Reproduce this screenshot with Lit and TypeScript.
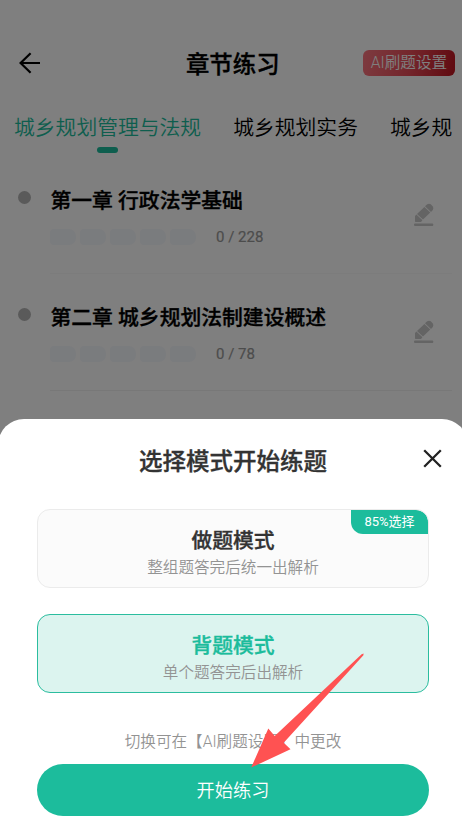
import { LitElement, html, css, svg, nothing } from "lit";
import { customElement, property, state } from "lit/decorators.js";
import { classMap } from "lit/directives/class-map.js";

@customElement("chapter-item")
class ChapterItem extends LitElement {
  @property() heading = "";
  @property() count = "";

  static styles = css`
    :host {
      display: flex;
      height: 117px;
      padding: 0 10px 0 18px;
      box-sizing: border-box;
    }
    .dot {
      width: 13px;
      height: 13px;
      border-radius: 50%;
      background: #b4b4b4;
      margin: 34px 19px 0 0;
      flex: none;
    }
    .row {
      flex: 1;
      display: flex;
      justify-content: space-between;
      border-bottom: 1px solid #f1f1f1;
    }
    :host(:first-child) .row {
      border-bottom-color: #f8f8f8;
    }
    .heading {
      margin-top: 29px;
      padding-left: 0.5px;
      font-size: 20.8px;
      line-height: 30px;
      font-weight: 500;
      -webkit-text-stroke: 0.35px currentColor;
      white-space: nowrap;
    }
    .progress {
      display: flex;
      align-items: center;
      gap: 4px;
      height: 16px;
      margin-top: 13px;
    }
    .seg {
      width: 26px;
      height: 16px;
      border-radius: 4px 7px 7px 4px;
      background: #f5f8fc;
    }
    .count {
      margin-left: 16px;
      font-size: 15px;
      line-height: 17px;
      -webkit-text-stroke: 0.2px currentColor;
      color: #999;
      white-space: nowrap;
    }
    .edit {
      width: 20px;
      height: 24px;
      margin: 46px 18px 0 0;
      flex: none;
    }
  `;

  render() {
    return html`
      <span class="dot"></span>
      <div class="row">
        <div>
          <div class="heading">${this.heading}</div>
          <div class="progress">
            ${[0, 1, 2, 3, 4].map(() => html`<span class="seg"></span>`)}
            <span class="count">${this.count}</span>
          </div>
        </div>
        <svg class="edit" viewBox="0 0 20 24" fill="#c8c8c8">
          <path d="M11 3.2 L13.2 1.3 Q15 0 16.8 1.3 L18.8 3.4 Q20 5.2 18.8 6.9 L17 8.9 Z" />
          <path d="M10.4 3.9 L16.3 9.6 L9 16.6 L3 10.9 Z" />
          <path d="M2.4 11.5 L8.4 17.2 L7 18.9 L1.6 18.9 Q1 18.9 1 18.3 L1 12.9 Z" />
          <rect x="0" y="20.6" width="19.3" height="2.3" rx="1" />
        </svg>
      </div>
    `;
  }
}

@customElement("mode-card")
class ModeCard extends LitElement {
  @property() heading = "";
  @property() note = "";
  @property() tag = "";
  @property({ type: Boolean }) selected = false;

  static styles = css`
    :host {
      display: block;
    }
    .card {
      position: relative;
      box-sizing: border-box;
      height: 79px;
      border: 1px solid #ebebeb;
      border-radius: 13px;
      background: #fbfbfb;
      text-align: center;
      padding-top: 16px;
      color: #333;
      overflow: hidden;
    }
    .selected {
      background: #dcf4ef;
      border-color: #2bbd9f;
    }
    .heading {
      font-size: 20.8px;
      line-height: 30px;
      font-weight: 500;
      -webkit-text-stroke: 0.35px currentColor;
    }
    .selected .heading {
      color: #1cbc9c;
    }
    .note {
      margin-top: 1px;
      font-size: 15.6px;
      line-height: 22px;
      font-weight: 350;
      color: #939393;
    }
    .tag {
      position: absolute;
      top: 0;
      right: 0;
      width: 77px;
      height: 23.5px;
      line-height: 23px;
      font-size: 13px;
      color: #fff;
      background: #1cbc9c;
      border-radius: 0 12px 0 12px;
    }
  `;

  render() {
    return html`
      <div class=${classMap({ card: true, selected: this.selected })}>
        <div class="heading">${this.heading}</div>
        <div class="note">${this.note}</div>
        ${this.tag ? html`<span class="tag">${this.tag}</span>` : nothing}
      </div>
    `;
  }
}

@customElement("app-root")
class AppRoot extends LitElement {
  @state() private mode = 1;

  static styles = css`
    :host {
      display: block;
      position: relative;
      height: 821px;
      overflow: hidden;
      background: #fff;
      color: #000;
      font-family: Roboto, "Noto Sans CJK SC", sans-serif;
    }
    .bar {
      display: grid;
      grid-template-columns: 1fr auto 1fr;
      align-items: center;
      height: 46px;
      padding: 40px 7px 0 18px;
    }
    .back {
      width: 23px;
      height: 24px;
    }
    .title {
      font-size: 23.4px;
      line-height: 32px;
      font-weight: 500;
      -webkit-text-stroke: 0.35px currentColor;
      padding: 3px 11px 0 0;
      margin-left: 3.5px;
    }
    .settings {
      justify-self: end;
      width: 92px;
      height: 26px;
      border-radius: 6px;
      background: linear-gradient(100deg, #fb7680, #e84c58 50%, #c01420);
      color: #fff;
      font-size: 15.6px;
      line-height: 27px;
      font-weight: 350;
      text-align: center;
      white-space: nowrap;
    }
    .tabs {
      display: flex;
      gap: 32px;
      height: 68px;
      padding: 27px 0 0 14px;
      box-sizing: border-box;
      font-size: 20.8px;
      line-height: 30px;
      font-weight: 350;
      white-space: nowrap;
    }
    .tab {
      display: flex;
      flex-direction: column;
      align-items: center;
      gap: 4px;
      flex: none;
    }
    .active {
      color: #1cbc9c;
    }
    .active::after {
      content: "";
      width: 21px;
      height: 6px;
      border-radius: 3px;
      background: #1cbc9c;
    }
    .list {
      padding-top: 3px;
    }
    .mask {
      position: absolute;
      inset: 0;
      background: rgba(0, 0, 0, 0.5);
    }
    .sheet {
      position: absolute;
      left: -2px;
      right: -6px;
      top: 419px;
      bottom: 0;
      box-sizing: border-box;
      padding: 0 39px;
      border-radius: 26px 26px 0 0;
      background: #fff;
      display: flex;
      flex-direction: column;
    }
    .head {
      display: flex;
      justify-content: center;
      padding-top: 27px;
      height: 63px;
      font-size: 23.5px;
      line-height: 32px;
      font-weight: 500;
      -webkit-text-stroke: 0.35px currentColor;
      color: #333;
    }
    .close {
      position: absolute;
      right: 26px;
      top: 30px;
      width: 19px;
      height: 19px;
    }
    .cards {
      display: flex;
      flex-direction: column;
      gap: 26px;
    }
    .hint {
      margin-top: 36.5px;
      text-align: center;
      font-size: 15.6px;
      line-height: 24px;
      font-weight: 350;
      color: #939393;
    }
    .start {
      margin-top: 10.5px;
      height: 52px;
      border-radius: 26px;
      background: #1cbc9c;
      color: #fff;
      font-size: 18.2px;
      line-height: 53px;
      font-weight: 350;
      text-align: center;
    }
    .pointer {
      position: absolute;
      left: 250px;
      top: 652px;
      width: 115px;
      height: 117px;
    }
  `;

  private tabs = ["城乡规划管理与法规", "城乡规划实务", "城乡规"];
  private chapters = [
    ["第一章 行政法学基础", "0 / 228"],
    ["第二章 城乡规划法制建设概述", "0 / 78"],
  ];
  private modes = [
    ["做题模式", "整组题答完后统一出解析", "85%选择"],
    ["背题模式", "单个题答完后出解析", ""],
  ];

  render() {
    return html`
      <div class="bar">
        <svg class="back" viewBox="0 0 23 24" fill="none" stroke="#000" stroke-width="2.2">
          <path d="M12.6 2.2 L2.6 12 L12.6 21.8 M2.6 12 H22" />
        </svg>
        <div class="title">章节练习</div>
        <div class="settings">AI刷题设置</div>
      </div>
      <div class="tabs">
        ${this.tabs.map((t, i) => html`<div class=${classMap({ tab: true, active: i === 0 })}>${t}</div>`)}
      </div>
      <div class="list">
        ${this.chapters.map(([h, c]) => html`<chapter-item .heading=${h} .count=${c}></chapter-item>`)}
      </div>
      <div class="mask"></div>
      <div class="sheet">
        <div class="head">选择模式开始练题</div>
        <svg class="close" viewBox="0 0 19 19" fill="none" stroke="#222" stroke-width="2.3">
          <path d="M1.2 1.2 L17.8 17.8 M17.8 1.2 L1.2 17.8" />
        </svg>
        <div class="cards">
          ${this.modes.map(
            ([h, n, t], i) => html`<mode-card
              .heading=${h}
              .note=${n}
              .tag=${t}
              .selected=${i === this.mode}
              @click=${() => (this.mode = i)}
            ></mode-card>`
          )}
        </div>
        <div class="hint">切换可在【AI刷题设置】中更改</div>
        <div class="start">开始练习</div>
      </div>
      <svg class="pointer" viewBox="250 652 115 117">
        ${svg`<path fill="#ff5252" d="M363.6 653.6 L363.4 655.2 L283.7 742.8 L290.5 749.3 L251.2 767.6 L268.3 728.4 L274.7 736 L361.6 654.2 Z" />`}
      </svg>
    `;
  }
}
